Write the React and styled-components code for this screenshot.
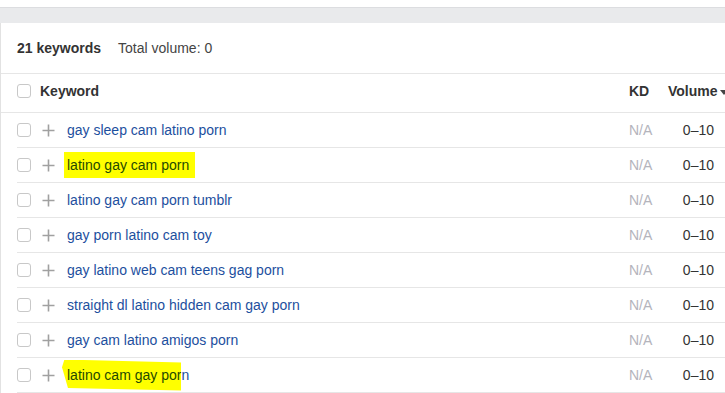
import React from "react";
import styled, { createGlobalStyle } from "styled-components";

const rows = [
  { text: "gay sleep cam latino porn" },
  { text: "latino gay cam porn", mark: "box" },
  { text: "latino gay cam porn tumblr" },
  { text: "gay porn latino cam toy" },
  { text: "gay latino web cam teens gag porn" },
  { text: "straight dl latino hidden cam gay porn" },
  { text: "gay cam latino amigos porn" },
  { text: "latino cam gay porn", mark: "scribble" },
];

const App = () => (
  <Page>
    <GlobalStyle />
    <TopStrip />
    <Panel>
      <Summary>
        <Count>21 keywords</Count>
        <Total>Total volume: 0</Total>
      </Summary>
      <HeadRow>
        <Checkbox />
        <HeadKeyword>Keyword</HeadKeyword>
        <KdCell>KD</KdCell>
        <VolumeHead>
          Volume
          <Caret />
        </VolumeHead>
      </HeadRow>
      {rows.map((row, i) => (
        <Row key={i}>
          <Checkbox />
          <Plus>
            <svg width="13" height="13" viewBox="0 0 13 13">
              <path d="M6.5 0.5v12M0.5 6.5h12" stroke="#a0a0a0" strokeWidth="1.6" fill="none" />
            </svg>
          </Plus>
          <KeywordCell>{renderKeyword(row)}</KeywordCell>
          <KdCell muted>N/A</KdCell>
          <Volume>0–10</Volume>
        </Row>
      ))}
    </Panel>
  </Page>
);

function renderKeyword(row) {
  if (row.mark === "box") {
    return <BoxMark>{row.text}</BoxMark>;
  }
  if (row.mark === "scribble") {
    const head = row.text.slice(0, -1);
    const tail = row.text.slice(-1);
    return (
      <>
        <ScribbleMark>{head}</ScribbleMark>
        <Link>{tail}</Link>
      </>
    );
  }
  return <Link>{row.text}</Link>;
}

const GlobalStyle = createGlobalStyle`
  html, body {
    margin: 0;
    padding: 0;
    background: #fff;
    overflow: hidden;
  }
  body {
    font-family: "Liberation Sans", Arial, sans-serif;
    font-size: 14px;
    color: #333;
  }
`;

const Page = styled.div`
  width: 725px;
  height: 393px;
  overflow: hidden;
  padding-top: 7px;
  box-sizing: border-box;
`;
const TopStrip = styled.div`
  height: 15px;
  background: #e9eaec;
  border-top: 1px solid #dcdde0;
`;
const Panel = styled.div`
  width: 725px;
  box-sizing: border-box;
  background: #fff;
  border-left: 1px solid #e2e2e2;
`;
const Summary = styled.div`
  display: flex;
  align-items: center;
  height: 50px;
  padding-left: 16px;
  border-bottom: 1px solid #e6e6e6;
`;
const Count = styled.span`
  font-weight: bold;
  color: #333;
  margin-right: 17px;
`;
const Total = styled.span`
  color: #444;
`;
const HeadRow = styled.div`
  display: flex;
  align-items: center;
  height: 38px;
  padding: 0 0 4px 16px;
  box-sizing: border-box;
  height: 39px;
  border-bottom: 1px solid #e6e6e6;
  font-weight: bold;
  color: #333;
`;
const Checkbox = styled.span`
  flex: none;
  width: 12px;
  height: 12px;
  border: 1px solid #c8c8c8;
  border-radius: 3px;
  background: #fff;
`;
const HeadKeyword = styled.span`
  margin-left: 9px;
  flex: 1;
`;
const KdCell = styled.span`
  flex: none;
  width: 39px;
  color: ${props => (props.muted ? "#b4b4bc" : "#333")};
`;
const VolumeHead = styled.span`
  flex: none;
  display: flex;
  align-items: center;
  width: 57px;
`;
const Caret = styled.span`
  margin-left: 2px;
  margin-top: 2px;
  border-left: 4px solid transparent;
  border-right: 4px solid transparent;
  border-top: 5px solid #444;
`;
const Row = styled.div`
  display: flex;
  align-items: center;
  height: 34px;
  margin-left: 16px;
  border-bottom: 1px solid #e6e6e6;
`;
const Plus = styled.span`
  display: flex;
  margin-left: 11px;
  margin-right: 12px;
`;
const KeywordCell = styled.span`
  flex: 1;
  display: flex;
  align-items: center;
`;
const Link = styled.span`
  color: #1d4f9e;
`;
const BoxMark = styled.span`
  background: #ffff00;
  color: #1f4a00;
  padding: 5px 6px 5px 3px;
  margin-left: -3px;
`;
const ScribbleMark = styled.span`
  background: #ffff00;
  color: #1f4a00;
  padding: 7px 0 8px 5px;
  margin-left: -5px;
  clip-path: polygon(2% 0, 100% 10%, 100% 100%, 5% 92%, 0 25%);
`;
const Volume = styled.span`
  flex: none;
  width: 57px;
  padding-right: 11px;
  box-sizing: border-box;
  text-align: right;
  color: #333;
`;

export default App;
